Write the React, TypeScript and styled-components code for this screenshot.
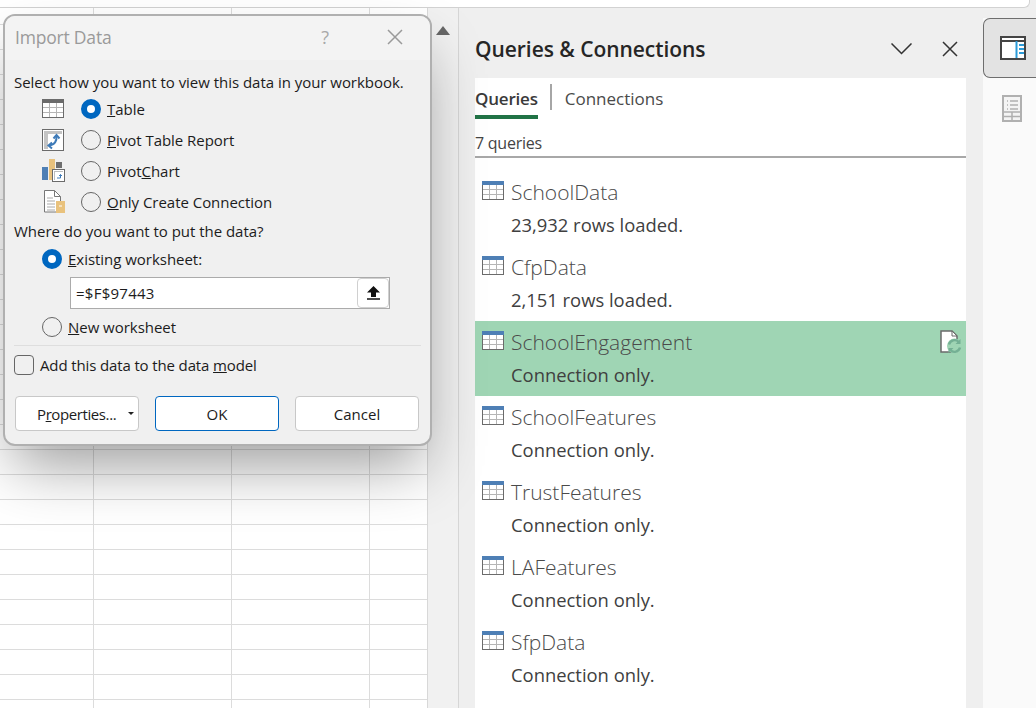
import React from 'react';
import styled, { createGlobalStyle } from 'styled-components';

const GlobalStyle = createGlobalStyle`
  html, body {
    margin: 0;
    padding: 0;
    background: #efefef;
  }
  * {
    box-sizing: border-box;
  }
`;

const Page = styled.div`
  position: relative;
  width: 1036px;
  height: 708px;
  overflow: hidden;
  display: flex;
  flex-direction: column;
  background: #efefef;
  color: #262626;
  font-family: 'Open Sans', 'Noto Sans', sans-serif;
`;

const TopBar = styled.div`
  flex: none;
  height: 8px;
  margin-right: 6px;
  background: #fff;
  border-bottom: 1px solid #d2d2d2;
  border-right: 1px solid #d2d2d2;
  border-bottom-right-radius: 6px;
`;

const Body = styled.div`
  flex: 1;
  display: flex;
  min-height: 0;
`;

const Sheet = styled.div`
  flex: none;
  width: 428px;
  background-color: #fff;
  border-right: 1px solid #d8d8d8;
  background-image:
    linear-gradient(#dcdcdc, #dcdcdc),
    linear-gradient(#dcdcdc, #dcdcdc),
    linear-gradient(#dcdcdc, #dcdcdc),
    repeating-linear-gradient(to bottom, transparent 0 24px, #dcdcdc 24px 25px);
  background-size: 1px 100%, 1px 100%, 1px 100%, 100% 100%;
  background-position: 93px 0, 231px 0, 369px 0, 0 -8px;
  background-repeat: no-repeat;
`;

const ScrollTrack = styled.div`
  flex: none;
  width: 31px;
  border-right: 1px solid #d6d6d6;
  padding: 18px 0 0 8px;
  background: #f1f1f1;
`;

const ScrollArrow = styled.div`
  width: 0;
  height: 0;
  border-left: 7px solid transparent;
  border-right: 7px solid transparent;
  border-bottom: 9px solid #666;
`;

const Panel = styled.div`
  flex: none;
  width: 507px;
  padding: 10px 0 0 16px;
  display: flex;
  flex-direction: column;
`;

const PanelHeader = styled.div`
  flex: none;
  height: 60px;
  padding: 2px 8px 0 0;
  display: flex;
  align-items: center;
  gap: 30px;
`;

const PanelTitle = styled.div`
  flex: 1;
  font-size: 21px;
  font-weight: 600;
  letter-spacing: -0.05px;
  color: #262626;
`;

const HeaderButton = styled.button`
  display: flex;
  padding: 0;
  border: 0;
  background: none;
  color: #333;
`;

const PanelContent = styled.div`
  flex: 1;
  background: #fff;
  min-height: 0;
`;

const Tabs = styled.div`
  height: 41px;
  display: flex;
  align-items: flex-start;
  padding-top: 6px;
`;

const Tab = styled.div<{ $active?: boolean }>`
  height: 35px;
  padding-top: 2px;
  font-size: 17px;
  line-height: 26px;
  font-weight: ${p => (p.$active ? 600 : 400)};
  color: ${p => (p.$active ? '#3a3a3a' : '#4a4a4a')};
  letter-spacing: ${p => (p.$active ? '-0.2px' : '0')};
  border-bottom: ${p => (p.$active ? '4px solid #217346' : '4px solid transparent')};
`;

const TabDivider = styled.div`
  width: 2px;
  height: 26px;
  margin: 0 13px 0 12px;
  background: #a6a6a6;
`;

const QueryCount = styled.div`
  height: 39px;
  padding-top: 11px;
  font-size: 16px;
  line-height: 26px;
  letter-spacing: -0.25px;
  color: #444;
  border-bottom: 2px solid #a8a8a8;
`;

const QueryList = styled.div`
  padding-top: 13px;
`;

const QueryItem = styled.div<{ $selected?: boolean }>`
  position: relative;
  height: 75px;
  padding: 5px 0 0 7px;
  display: flex;
  gap: 7px;
  background: ${p => (p.$selected ? '#9fd5b4' : 'transparent')};
`;

const QueryIconSlot = styled.div`
  flex: none;
  padding-top: 5px;
`;

const QueryName = styled.div`
  font-size: 21px;
  font-weight: 300;
  line-height: 32px;
  color: #4a4a4a;
`;

const QueryDetail = styled.div`
  font-size: 18.4px;
  line-height: 33px;
  color: #404040;
`;

const RefreshBadge = styled.div`
  position: absolute;
  top: 9px;
  right: 4px;
`;

const Rail = styled.div`
  flex: 1;
  margin: 10px 0 0 17px;
  background: #fafafa;
  display: flex;
  flex-direction: column;
`;

const RailActive = styled.div`
  height: 60px;
  display: flex;
  align-items: center;
  justify-content: center;
  background: #e3e3e3;
  border: 1px solid #6e6e6e;
  border-right: 0;
  border-radius: 7px 0 0 7px;
  padding-left: 5px;
`;

const RailItem = styled.div`
  height: 60px;
  display: flex;
  align-items: center;
  justify-content: center;
  padding-left: 5px;
`;

const Dialog = styled.div`
  position: absolute;
  left: 3px;
  top: 14px;
  width: 429px;
  height: 432px;
  border: 2px solid #b0b0b0;
  border-radius: 12px;
  background: #f0f0f0;
  box-shadow: 0 30px 60px -10px rgba(0, 0, 0, 0.38);
  overflow: hidden;
  font-size: 15px;
  letter-spacing: -0.03px;
  color: #1c1c1c;
`;

const DialogTitleBar = styled.div`
  height: 44px;
  padding: 0 27px 3px 10px;
  display: flex;
  align-items: center;
  background: #f3f3f3;
  color: #9a9a9a;
`;

const DialogTitle = styled.div`
  flex: 1;
  font-size: 17.5px;
  letter-spacing: -0.2px;
`;

const HelpMark = styled.div`
  margin-right: 58px;
  font-size: 18px;
  color: #a8a8a8;
`;

const DialogBody = styled.div`
  padding: 11px 9px 0 9px;
`;

const Line = styled.div<{ $gap?: number }>`
  height: 22px;
  line-height: 22px;
  margin-top: ${p => p.$gap ?? 0}px;
  white-space: nowrap;
`;

const OptionRow = styled.div`
  height: 31px;
  display: flex;
  align-items: center;
  padding-left: 28px;
`;

const OptionIcon = styled.div`
  width: 39px;
  flex: none;
  display: flex;
`;

const Radio = styled.span<{ $checked?: boolean }>`
  flex: none;
  width: 20px;
  height: 20px;
  border-radius: 50%;
  margin-right: 6px;
  background: ${p => (p.$checked ? '#fff' : 'transparent')};
  border: ${p => (p.$checked ? '6px solid #0067c0' : '1px solid #666')};
`;

const PlainRow = styled.div<{ $gap: number }>`
  display: flex;
  align-items: center;
  height: 31px;
  margin-top: ${p => p.$gap}px;
  padding-left: 28px;
`;

const RefInput = styled.div`
  margin: 3px 0 0 56px;
  width: 320px;
  height: 32px;
  background: #fff;
  border: 1px solid #ababab;
  display: flex;
  align-items: center;
  justify-content: space-between;
  padding-left: 5px;
  letter-spacing: 0.25px;
`;

const RefButton = styled.div`
  width: 32px;
  height: 30px;
  display: flex;
  align-items: center;
  justify-content: center;
  border: 1px solid #d0d0d0;
  border-radius: 4px;
  background: #fff;
`;

const Divider = styled.div`
  height: 1px;
  margin-top: 3px;
  background: #dedede;
`;

const CheckRow = styled.div`
  height: 37px;
  display: flex;
  align-items: center;
  gap: 6px;
  letter-spacing: -0.13px;
`;

const Checkbox = styled.span`
  width: 20px;
  height: 20px;
  border: 1px solid #666;
  border-radius: 4px;
`;

const ButtonRow = styled.div`
  display: flex;
  gap: 16px;
  margin-top: 13px;
  padding-left: 1px;
`;

const DialogButton = styled.button<{ $primary?: boolean }>`
  width: 124px;
  height: 35px;
  padding: 0;
  display: flex;
  align-items: center;
  justify-content: center;
  background: #fff;
  font: inherit;
  color: #1c1c1c;
  border: 1px solid ${p => (p.$primary ? '#0067c0' : '#c8c8c8')};
  border-radius: 4px;
`;

const SplitButton = styled(DialogButton)`
  justify-content: flex-start;
  padding-left: 21px;
  letter-spacing: -0.4px;
`;

const Caret = styled.span`
  width: 0;
  height: 0;
  margin-left: 12px;
  border-left: 3px solid transparent;
  border-right: 3px solid transparent;
  border-top: 3px solid #222;
`;

const TableIcon = ({ header = '#4e7fb5', line = '#6b6b6b' }: { header?: string; line?: string }) => (
  <svg width="22" height="19" viewBox="0 0 22 19">
    <rect x="0.5" y="0.5" width="21" height="18" fill="#fff" stroke={line} />
    <rect x="0" y="0" width="22" height="4" fill={header} />
    <path d="M1 8.5h20M1 13.5h20M7.5 4v14M14.5 4v14" stroke="#b5b5b5" fill="none" />
  </svg>
);

const PivotIcon = () => (
  <svg width="22" height="22" viewBox="0 0 22 22">
    <rect x="0.5" y="0.5" width="21" height="21" fill="#fff" stroke="#6b6b6b" />
    <rect x="2" y="2" width="18" height="3" fill="#c4c4c4" />
    <rect x="2" y="5" width="4" height="15" fill="#c4c4c4" />
    <path d="M14.500 6C15 12 13 16 7 16.500" stroke="#3f7bb8" strokeWidth="2" fill="none" />
    <path d="M11.500 9.500l3-3.500 3 3.500M10 13.500l-3.500 3 3.500 3" stroke="#3f7bb8" strokeWidth="2" fill="none" />
  </svg>
);

const PivotChartIcon = () => (
  <svg width="23" height="23" viewBox="0 0 23 23">
    <rect x="0" y="8" width="6" height="13" fill="#4e7fb5" />
    <rect x="7" y="0" width="6" height="21" fill="#e9c27d" />
    <rect x="14" y="3" width="6" height="6" fill="#6e6e6e" />
    <rect x="10.500" y="10.500" width="12" height="12" fill="#fff" stroke="#6b6b6b" />
    <path d="M12 12.500h9M12.500 12v9" stroke="#bdbdbd" />
    <path d="M15 19h3.500v-3.500M17 17l1.500-1.500 1.500 1.500" stroke="#3f7bb8" fill="none" />
  </svg>
);

const ConnectionIcon = () => (
  <svg width="23" height="23" viewBox="0 0 23 23">
    <path d="M2.500 0.500h10l6 6v15.500h-16z" fill="#fff" stroke="#777" />
    <path d="M12.500 0.500v6h6" fill="none" stroke="#777" />
    <path d="M5 8h6M5 11h8M5 14h8M5 17h8M5 20h8" stroke="#aaa" />
    <rect x="14" y="11" width="9" height="12" fill="#e9c27d" />
    <path d="M17 16h3" stroke="#fff" />
  </svg>
);

const RefreshDocIcon = () => (
  <svg width="24" height="24" viewBox="0 0 24 24">
    <path d="M3 1h11l5 5v16H3z" fill="#fff" stroke="#6b6b6b" strokeWidth="1.500" />
    <path d="M14 1v5h5z" fill="#fff" stroke="#6b6b6b" strokeWidth="1" />
    <circle cx="16.500" cy="16" r="7.500" fill="#9fd5b4" />
    <path d="M11 14.500a5.700 5.700 0 0 1 9.700-2.500M22 17.500a5.700 5.700 0 0 1-9.700 2.500" stroke="#74b094" strokeWidth="2.400" fill="none" />
    <path d="M22.500 9v5h-5zM10.500 23v-5h5z" fill="#74b094" />
  </svg>
);

const TaskPaneIcon = () => (
  <svg width="26" height="24" viewBox="0 0 26 24">
    <rect x="1" y="1" width="24" height="22" fill="#fff" stroke="#444" strokeWidth="2" />
    <path d="M1 5h24" stroke="#444" strokeWidth="2" />
    <path d="M16.500 5v17" stroke="#2b9bd8" strokeWidth="2" />
    <path d="M19 9h5M19 13h5M19 17h5" stroke="#2b9bd8" strokeWidth="2" />
  </svg>
);

const SheetPaneIcon = () => (
  <svg width="20" height="27" viewBox="0 0 20 27">
    <rect x="1" y="1" width="18" height="25" fill="#f4f4f4" stroke="#b0b0b0" strokeWidth="2" />
    <path d="M5 6h1M8 6h8M5 10h1M8 10h8M5 14h1M8 14h8" stroke="#b0b0b0" strokeWidth="1.500" />
    <path d="M1 17h18M1 21.500h18M10 17v9" stroke="#b0b0b0" strokeWidth="1.500" />
  </svg>
);

const CloseIcon = ({ size, color, width = 1.5 }: { size: number; color: string; width?: number }) => (
  <svg width={size} height={size} viewBox="0 0 16 16">
    <path d="M1 1l14 14M15 1L1 15" stroke={color} strokeWidth={width} fill="none" />
  </svg>
);

const queries = [
  { name: 'SchoolData', detail: '23,932 rows loaded.' },
  { name: 'CfpData', detail: '2,151 rows loaded.' },
  { name: 'SchoolEngagement', detail: 'Connection only.', selected: true },
  { name: 'SchoolFeatures', detail: 'Connection only.' },
  { name: 'TrustFeatures', detail: 'Connection only.' },
  { name: 'LAFeatures', detail: 'Connection only.' },
  { name: 'SfpData', detail: 'Connection only.' },
];

export default function App() {
  return (
    <Page>
      <GlobalStyle />
      <TopBar />
      <Body>
        <Sheet />
        <ScrollTrack>
          <ScrollArrow />
        </ScrollTrack>
        <Panel>
          <PanelHeader>
            <PanelTitle>Queries &amp; Connections</PanelTitle>
            <HeaderButton>
              <svg width="21" height="12" viewBox="0 0 21 12">
                <path d="M0.500 0.500l10 10 10-10" stroke="#333" strokeWidth="1.500" fill="none" />
              </svg>
            </HeaderButton>
            <HeaderButton>
              <CloseIcon size={16} color="#333" />
            </HeaderButton>
          </PanelHeader>
          <PanelContent>
            <Tabs>
              <Tab $active>Queries</Tab>
              <TabDivider />
              <Tab>Connections</Tab>
            </Tabs>
            <QueryCount>7 queries</QueryCount>
            <QueryList>
              {queries.map(q => (
                <QueryItem key={q.name} $selected={q.selected}>
                  <QueryIconSlot>
                    <TableIcon />
                  </QueryIconSlot>
                  <div>
                    <QueryName>{q.name}</QueryName>
                    <QueryDetail>{q.detail}</QueryDetail>
                  </div>
                  {q.selected && (
                    <RefreshBadge>
                      <RefreshDocIcon />
                    </RefreshBadge>
                  )}
                </QueryItem>
              ))}
            </QueryList>
          </PanelContent>
        </Panel>
        <Rail>
          <RailActive>
            <TaskPaneIcon />
          </RailActive>
          <RailItem>
            <SheetPaneIcon />
          </RailItem>
        </Rail>
      </Body>

      <Dialog>
        <DialogTitleBar>
          <DialogTitle>Import Data</DialogTitle>
          <HelpMark>?</HelpMark>
          <CloseIcon size={16} color="#9a9a9a" />
        </DialogTitleBar>
        <DialogBody>
          <Line>Select how you want to view this data in your workbook.</Line>
          <OptionRow>
            <OptionIcon>
              <TableIcon header="#6b6b6b" />
            </OptionIcon>
            <Radio $checked />
            <span>
              <u>T</u>able
            </span>
          </OptionRow>
          <OptionRow>
            <OptionIcon>
              <PivotIcon />
            </OptionIcon>
            <Radio />
            <span>
              <u>P</u>ivot Table Report
            </span>
          </OptionRow>
          <OptionRow>
            <OptionIcon>
              <PivotChartIcon />
            </OptionIcon>
            <Radio />
            <span>
              Pivot<u>C</u>hart
            </span>
          </OptionRow>
          <OptionRow>
            <OptionIcon>
              <ConnectionIcon />
            </OptionIcon>
            <Radio />
            <span>
              <u>O</u>nly Create Connection
            </span>
          </OptionRow>
          <Line $gap={3}>Where do you want to put the data?</Line>
          <PlainRow $gap={1}>
            <Radio $checked />
            <span>
              <u>E</u>xisting worksheet:
            </span>
          </PlainRow>
          <RefInput>
            =$F$97443
            <RefButton>
              <svg width="13" height="14" viewBox="0 0 13 14">
                <path d="M6.500 0L13 6.500H9V11H4V6.500H0z" fill="#111" />
                <path d="M0 13h13" stroke="#111" strokeWidth="1.500" />
              </svg>
            </RefButton>
          </RefInput>
          <PlainRow $gap={2}>
            <Radio />
            <span>
              <u>N</u>ew worksheet
            </span>
          </PlainRow>
          <Divider />
          <CheckRow>
            <Checkbox />
            <span>
              Add this data to the data <u>m</u>odel
            </span>
          </CheckRow>
          <ButtonRow>
            <SplitButton>
              <span>
                P<u>r</u>operties...
              </span>
              <Caret />
            </SplitButton>
            <DialogButton $primary>OK</DialogButton>
            <DialogButton>Cancel</DialogButton>
          </ButtonRow>
        </DialogBody>
      </Dialog>
    </Page>
  );
}
